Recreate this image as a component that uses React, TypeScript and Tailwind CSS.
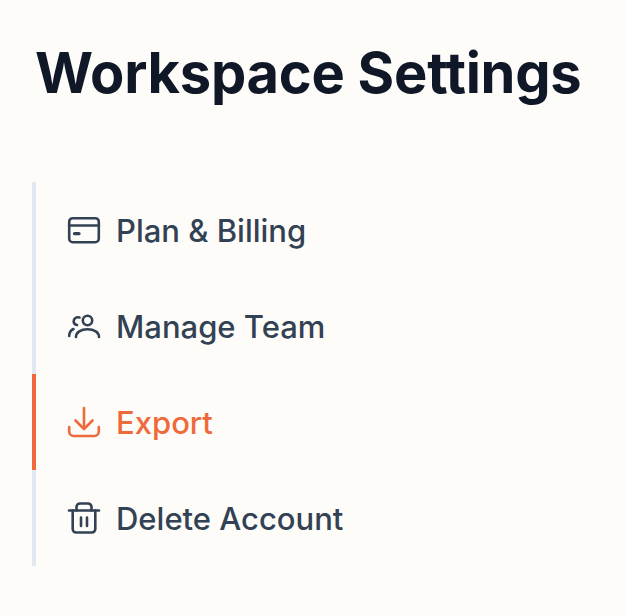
const items = [
  {
    label: 'Plan & Billing',
    icon: (
      <>
        <rect x="5.2" y="4.2" width="29.6" height="24" rx="3.5" />
        <path d="M5.200 11.500h29.600" />
        <path d="M10.500 19.700h4.500" strokeWidth="3.200" />
      </>
    ),
  },
  {
    label: 'Manage Team',
    icon: (
      <>
        <circle cx="23.5" cy="10.5" r="4.700" />
        <path d="M12 27c0-4.800 4.800-7.800 11.500-7.800S35 22.200 35 27" />
        <path d="M15.500 7.500c-3.200-1-5.800 1-5.800 3.700 0 2 1.300 3.500 3.300 3.900" />
        <path d="M5.200 26c0-3.300 1.600-5.800 4.300-7" />
      </>
    ),
  },
  {
    label: 'Export',
    active: true,
    icon: (
      <>
        <path d="M20 2v20.500" />
        <path d="M11.500 14.500l8.500 8.500 8.500-8.500" />
        <path d="M5.200 21v4.500a4.500 4.500 0 0 0 4.500 4.500h20.600a4.500 4.500 0 0 0 4.500-4.500V21" />
      </>
    ),
  },
  {
    label: 'Delete Account',
    icon: (
      <>
        <path d="M5 8.500h30" />
        <path d="M8.700 8.500V27a3.500 3.500 0 0 0 3.500 3.500h15.600a3.500 3.500 0 0 0 3.500-3.500V8.500" />
        <path d="M12.500 8.500V5a3.500 3.500 0 0 1 3.500-3.500h8a3.500 3.500 0 0 1 3.500 3.500v3.500" />
        <path d="M17 15.500v8.500M23 15.500v8.500" />
      </>
    ),
  },
];

export default function App() {
  return (
    <div className="min-h-[616px] bg-[#fdfcf8] font-['Inter',sans-serif] pt-[37px] pl-8">
      <h1 className="pl-[3px] text-[56px] font-bold leading-[72px] tracking-[-0.25px] text-[#101828]">Workspace Settings</h1>
      <nav className="mt-[73px] w-[560px]">
        {items.map((item) => (
          <a
            key={item.label}
            className={`flex h-24 items-center gap-3 border-l-4 pl-8 text-[31px] font-[550] ${
              item.active ? 'border-[#ef6a3a] text-[#ef6a3a]' : 'border-[#e2e8f0] text-[#334155]'
            }`}
          >
            <svg
              viewBox="0 0 40 32"
              width="40"
              height="32"
              fill="none"
              stroke="currentColor"
              strokeWidth="2.600"
              strokeLinecap="round"
              strokeLinejoin="round"
              className="-ml-1"
            >
              {item.icon}
            </svg>
            <span className="pt-0.5">{item.label}</span>
          </a>
        ))}
      </nav>
    </div>
  );
}
